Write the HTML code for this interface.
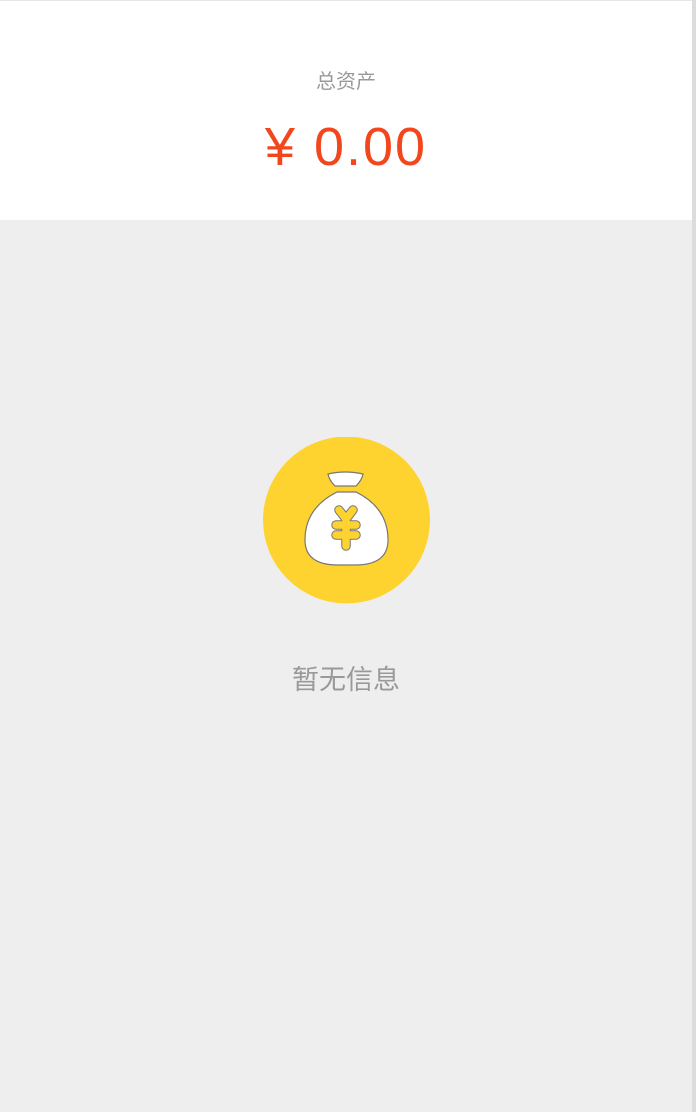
<!DOCTYPE html>
<html><head><meta charset="utf-8"><style>
html,body{margin:0;padding:0;}
body{width:696px;height:1112px;background:#eeeeee;position:relative;overflow:hidden;font-family:"Liberation Sans","Noto Sans CJK SC",sans-serif;}
.edge{position:absolute;right:0;top:0;width:4px;height:1112px;background:#dcdcdc;}
.head{position:absolute;left:0;top:0;width:692px;height:220px;background:#fff;border-top:1px solid #e6e6e6;box-sizing:border-box;}
.lbl{position:absolute;left:0;width:692px;top:64px;text-align:center;font-size:20px;color:#999;}
.amt{position:absolute;left:0;width:692px;top:114px;text-align:center;font-size:54px;color:#f2461c;line-height:64px;letter-spacing:2px;}
.empty{position:absolute;left:0;width:692px;top:658px;text-align:center;font-size:27px;color:#999;}
svg{position:absolute;left:263px;top:437px;}
</style></head><body>
<div class="edge"></div>
<div class="head">
<div class="lbl">总资产</div>
<div class="amt">¥ 0.00</div>
</div>
<svg width="167" height="167" viewBox="263 437 167 167">
<circle cx="346.5" cy="520" r="83.5" fill="#fed330"/>
<path d="M328 474 Q345 470 363 474 Q362 480 356 486 L335 486 Q329 480 328 474Z" fill="#fff" stroke="#777" stroke-width="1.2"/>
<path d="M337 492 L356 492 Q388 508 388 540 Q388 565 355 565 L338 565 Q305 565 305 540 Q305 508 337 492Z" fill="#fff" stroke="#777" stroke-width="1.2"/>
<path d="M339 510 L346 519 L353 510 M336 525 L356 525 M336 535 L356 535 M346 519 L346 546" fill="none" stroke="#777" stroke-width="9.5" stroke-linecap="round" stroke-linejoin="round"/>
<path d="M339 510 L346 519 L353 510 M336 525 L356 525 M336 535 L356 535 M346 519 L346 546" fill="none" stroke="#fed330" stroke-width="7.5" stroke-linecap="round" stroke-linejoin="round"/>
</svg>
<div class="empty">暂无信息</div>
</body></html>
